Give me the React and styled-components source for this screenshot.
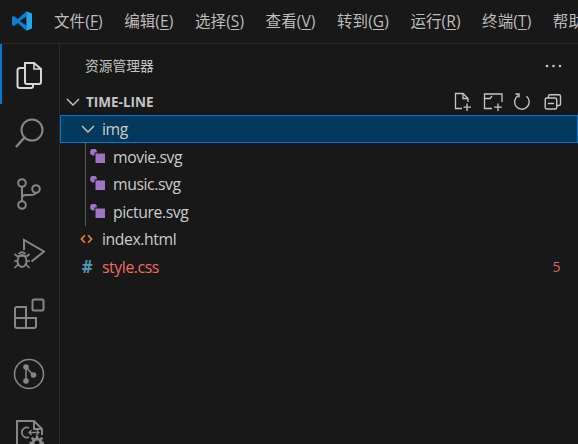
import React from "react";
import styled, { createGlobalStyle } from "styled-components";

const GlobalStyle = createGlobalStyle`
  html, body {
    margin: 0;
    padding: 0;
    background: #181818;
    overflow: hidden;
  }
  #root {
    width: 578px;
    height: 444px;
  }
`;

const FONT = `"Open Sans", "Noto Sans", "Noto Sans CJK SC", sans-serif`;

//layout
const Window = styled.div`
  width: 578px;
  height: 444px;
  display: flex;
  flex-direction: column;
  background: #181818;
  color: #cccccc;
  font-family: ${FONT};
  overflow: hidden;
`;

const TitleBar = styled.div`
  height: 43px;
  flex-shrink: 0;
  display: flex;
  align-items: center;
  padding-left: 12px;
  border-bottom: 1px solid #2b2b2b;
  white-space: nowrap;
`;

const Logo = styled.svg`
  width: 20px;
  height: 20px;
  flex-shrink: 0;
  margin-right: 22px;
  margin-top: -1px;
`;

const Menu = styled.div`
  display: flex;
  gap: 21.5px;
  margin-top: -1px;
`;

const MenuItem = styled.span`
  font-size: 15.5px;
  line-height: 20px;
  letter-spacing: 0.1px;
  color: #bdbdbd;
  flex-shrink: 0;

  u {
    text-underline-offset: 2px;
    text-decoration-thickness: 1px;
  }
`;

const Body = styled.div`
  flex: 1;
  display: flex;
  min-height: 0;
`;

const ActivityBar = styled.div`
  width: 59px;
  flex-shrink: 0;
  display: flex;
  flex-direction: column;
  border-right: 1px solid #2b2b2b;
`;

const ActivityItem = styled.div`
  height: 60px;
  flex-shrink: 0;
  display: flex;
  align-items: center;
  justify-content: center;
  border-left: 2px solid ${(p) => (p.$active ? "#0078d4" : "transparent")};
  margin-right: 1px;
  color: ${(p) => (p.$active ? "#d7d7d7" : "#868686")};

  svg {
    margin-left: -2px;
  }
`;

const Sidebar = styled.div`
  flex: 1;
  min-width: 0;
  display: flex;
  flex-direction: column;
`;

const SidebarHeader = styled.div`
  height: 44px;
  flex-shrink: 0;
  display: flex;
  align-items: center;
  justify-content: space-between;
  padding: 0 16px 0 25px;
`;

const SidebarTitle = styled.span`
  font-size: 13.75px;
  line-height: 18px;
  margin-top: -1px;
  color: #c4c4c4;
`;

const More = styled.svg`
  width: 17px;
  height: 4px;
`;

const SectionHeader = styled.div`
  height: 27px;
  flex-shrink: 0;
  display: flex;
  align-items: center;
  padding-left: 5px;
  padding-right: 16px;
`;

const Twistie = styled.svg`
  width: 16px;
  height: 10px;
  flex-shrink: 0;
  margin-right: ${(p) => p.$gap}px;
  color: #c5c5c5;
`;

const SectionTitle = styled.span`
  font-size: 13.5px;
  font-weight: 700;
  color: #c4c4c4;
  flex: 1;
`;

const Actions = styled.div`
  display: flex;
  align-items: center;
  gap: 10px;
  color: #c5c5c5;
`;

const CollapseSlot = styled.span`
  display: flex;
  margin-left: 3px;
`;

const Row = styled.div`
  height: ${(p) => (p.$selected ? "28px" : "27.5px")};
  box-sizing: border-box;
  display: flex;
  align-items: center;
  padding-left: ${(p) => p.$indent}px;
  padding-right: 18px;
  font-size: 15.75px;
  letter-spacing: -0.4px;
  color: ${(p) => p.$color || "#cccccc"};
  background: ${(p) => (p.$selected ? "#04395e" : "transparent")};
  border: ${(p) => (p.$selected ? "1px solid #0078d4" : "none")};
`;

const RowLabel = styled.span`
  flex: 1;
  line-height: 22px;
`;

const Badge = styled.span`
  font-size: 14px;
  color: #d0675c;
`;

const ChildGroup = styled.div`
  margin-left: 25px;
  border-left: 1px solid #585858;
  height: 82.5px;
`;

const IconSlot = styled.span`
  width: 17px;
  height: 16px;
  flex-shrink: 0;
  margin-right: 6px;
  display: flex;
  align-items: center;
  justify-content: center;
`;

const HashIcon = styled.span`
  font-size: 17px;
  font-weight: 700;
  line-height: 16px;
  margin-left: -1px;
  color: #519aba;
`;

//icons
const VSCodeLogo = () => (
  <Logo viewBox="0 0 100 100">
    <path
      fillRule="evenodd"
      fill="#0e7fd2"
      d="M72 99 L29 60 L10 75 L0 70 V30 L10 25 L29 40 L72 1 L72 27 L39 50 L72 73 Z"
    />
    <path fill="#23a6f0" d="M72 1 L100 13 V87 L72 99 Z" />
  </Logo>
);

const FilesIcon = () => (
  <svg width="30" height="30" viewBox="0 0 30 30" fill="none" stroke="currentColor" strokeWidth="2">
    <path d="M11 4 H20 L27 10 V23 Q27 25 25 25 H13 Q11 25 11 23 Z" />
    <path d="M20 4 V10 H27" strokeWidth="1.6" />
    <path d="M11 9 H6 Q3.5 9 3.5 11.5 V27 Q3.5 29 6 29 H17 Q19 29 19 27 V25" />
  </svg>
);

const SearchIcon = () => (
  <svg width="30" height="32" viewBox="0 0 30 32" fill="none" stroke="currentColor" strokeWidth="2">
    <circle cx="18" cy="12" r="10.5" />
    <path d="M10.5 19.5 L2 29" strokeWidth="2.4" />
  </svg>
);

const BranchIcon = () => (
  <svg width="24" height="32" viewBox="0 0 24 32" fill="none" stroke="currentColor" strokeWidth="2">
    <circle cx="5" cy="5" r="3.8" />
    <circle cx="5" cy="27" r="3.8" />
    <circle cx="19" cy="11" r="3.8" />
    <path d="M5 9 V23" />
    <path d="M5 20 Q5 17 9 17 H13 Q18 17 18.5 15" />
  </svg>
);

const DebugIcon = () => (
  <svg width="32" height="32" viewBox="0 0 32 32" fill="none" stroke="currentColor" strokeWidth="2">
    <path d="M11 12 V2 L31 13.5 L18.5 23.5" />
    <ellipse cx="9" cy="23" rx="4.5" ry="6" />
    <path d="M5.5 16 Q9 12.5 12.5 16 M4 18 H14 M1 23 H4 M14 23 H17 M1.5 30 L5 26.5 M16.5 30 L13 26.5 M1.5 16 L4.5 18.5 M16.5 16 L13.5 18.5" strokeWidth="1.7" />
  </svg>
);

const ExtensionsIcon = () => (
  <svg width="32" height="32" viewBox="0 0 32 32" fill="none" stroke="currentColor" strokeWidth="2">
    <path d="M2 11 Q2 9 4 9 H13 V30 H4 Q2 30 2 28 Z" />
    <path d="M2 20 H23 V28 Q23 30 21 30 H13" />
    <rect x="19.5" y="1.5" width="11" height="11" rx="1.5" />
  </svg>
);

const GitGraphIcon = () => (
  <svg width="32" height="32" viewBox="0 0 32 32" fill="none">
    <circle cx="16" cy="16" r="14.5" stroke="currentColor" strokeWidth="1.6" />
    <path d="M13 9 V23 M13 9 L20 17" stroke="currentColor" strokeWidth="1.6" />
    <circle cx="13" cy="9" r="2.8" fill="currentColor" />
    <circle cx="13" cy="23" r="2.8" fill="currentColor" />
    <circle cx="20.5" cy="17" r="2.8" fill="currentColor" />
  </svg>
);

const ConfigFileIcon = () => (
  <svg width="30" height="32" viewBox="0 0 30 32" fill="none" stroke="currentColor" strokeWidth="2" style={{ marginTop: 2 }}>
    <path d="M3 30 V2 H20 L28 10 V16 M20 2 V10 H28" />
    <path d="M15 9 A5 5 0 1 0 15 18" strokeWidth="1.8" />
    <path d="M15 13.5 H25 M17.5 11 L15 13.5 L17.5 16 M22.5 11 L25 13.5 L22.5 16" strokeWidth="1.3" />
    <circle cx="23" cy="24" r="4" strokeWidth="3" />
    <path d="M23 16.5 V19 M23 29 V31.5 M15.5 24 H18 M28 24 H30 M17.7 18.7 L19.5 20.5 M26.5 27.5 L28.3 29.3 M28.3 18.7 L26.5 20.5 M19.5 27.5 L17.7 29.3" strokeWidth="2.6" />
  </svg>
);

const NewFileIcon = () => (
  <svg width="20" height="20" viewBox="0 0 20 20" fill="none" stroke="currentColor" strokeWidth="1.3">
    <path d="M9 16.5 H2.5 V1.5 H10 L15 6.5 V10" />
    <path d="M10 1.5 V6.5 H15" />
    <path d="M14 11.5 V19 M10.5 15.2 H18" />
  </svg>
);

const NewFolderIcon = () => (
  <svg width="20" height="20" viewBox="0 0 20 20" fill="none" stroke="currentColor" strokeWidth="1.3">
    <path d="M9 16.5 H1.5 V2 H19 V10" />
    <path d="M1.5 6.5 H7 L9 4" />
    <path d="M15 11.5 V19 M11.2 15.2 H18.8" />
  </svg>
);

const RefreshIcon = () => (
  <svg width="18" height="18" viewBox="0 0 18 18" fill="none" stroke="currentColor" strokeWidth="1.4">
    <path d="M5.2 2.6 A7.3 7.3 0 1 0 13.5 3.2" />
    <path d="M2.5 1 H6 V4.6" />
  </svg>
);

const CollapseIcon = () => (
  <svg width="18" height="18" viewBox="0 0 18 18" fill="none" stroke="currentColor" strokeWidth="1.4">
    <rect x="1.2" y="5" width="11.5" height="11" rx="1.5" />
    <path d="M4.5 5 V3.2 Q4.5 1.8 6 1.8 H15 Q16.5 1.8 16.5 3.2 V11 Q16.5 12.5 15 12.5 H12.7" />
    <path d="M3.8 10.5 H10" />
  </svg>
);

const SvgFileIcon = () => (
  <svg width="17" height="16" viewBox="0 0 17 16">
    <circle cx="3.5" cy="3" r="3.4" fill="#a074c4" />
    <rect x="5" y="4" width="10.5" height="10.5" fill="#a074c4" stroke="#181818" strokeWidth="1" />
  </svg>
);

const HtmlIcon = () => (
  <svg width="13" height="10" viewBox="0 0 15 12" fill="none" stroke="#e37933" strokeWidth="2.2" style={{ marginLeft: -3 }}>
    <path d="M5.5 1.5 L1.5 6 L5.5 10.5 M9.5 1.5 L13.5 6 L9.5 10.5" />
  </svg>
);

const Chevron = ({ gap }) => (
  <Twistie $gap={gap} viewBox="0 0 16 10" fill="none" stroke="currentColor" strokeWidth="1.4">
    <path d="M2 2 L8 8 L14 2" />
  </Twistie>
);

//data
const menus = [
  ["文件", "F"],
  ["编辑", "E"],
  ["选择", "S"],
  ["查看", "V"],
  ["转到", "G"],
  ["运行", "R"],
  ["终端", "T"],
  ["帮助", "H"],
];

const activity = [
  { key: "files", icon: <FilesIcon />, active: true },
  { key: "search", icon: <SearchIcon /> },
  { key: "scm", icon: <BranchIcon /> },
  { key: "debug", icon: <DebugIcon /> },
  { key: "extensions", icon: <ExtensionsIcon /> },
  { key: "graph", icon: <GitGraphIcon /> },
  { key: "config", icon: <ConfigFileIcon /> },
];

const svgFiles = ["movie.svg", "music.svg", "picture.svg"];

export default function App() {
  return (
    <Window>
      <GlobalStyle />
      <TitleBar>
        <VSCodeLogo />
        <Menu>
          {menus.map(([name, key]) => (
            <MenuItem key={key}>
              {name}(<u>{key}</u>)
            </MenuItem>
          ))}
        </Menu>
      </TitleBar>
      <Body>
        <ActivityBar>
          {activity.map((a) => (
            <ActivityItem key={a.key} $active={a.active}>
              {a.icon}
            </ActivityItem>
          ))}
        </ActivityBar>
        <Sidebar>
          <SidebarHeader>
            <SidebarTitle>资源管理器</SidebarTitle>
            <More viewBox="0 0 17 4" fill="#c5c5c5">
              <circle cx="2" cy="2" r="1.3" />
              <circle cx="8.5" cy="2" r="1.3" />
              <circle cx="15" cy="2" r="1.3" />
            </More>
          </SidebarHeader>
          <SectionHeader>
            <Chevron gap={5} />
            <SectionTitle>TIME-LINE</SectionTitle>
            <Actions>
              <NewFileIcon />
              <NewFolderIcon />
              <RefreshIcon />
              <CollapseSlot>
                <CollapseIcon />
              </CollapseSlot>
            </Actions>
          </SectionHeader>
          <Row $selected $indent={19}>
            <Chevron gap={6} />
            <RowLabel>img</RowLabel>
          </Row>
          <ChildGroup>
            {svgFiles.map((name) => (
              <Row key={name} $indent={4}>
                <IconSlot>
                  <SvgFileIcon />
                </IconSlot>
                <RowLabel>{name}</RowLabel>
              </Row>
            ))}
          </ChildGroup>
          <Row $indent={19}>
            <IconSlot>
              <HtmlIcon />
            </IconSlot>
            <RowLabel>index.html</RowLabel>
          </Row>
          <Row $indent={19} $color="#f4695d">
            <IconSlot>
              <HashIcon>#</HashIcon>
            </IconSlot>
            <RowLabel>style.css</RowLabel>
            <Badge>5</Badge>
          </Row>
        </Sidebar>
      </Body>
    </Window>
  );
}
